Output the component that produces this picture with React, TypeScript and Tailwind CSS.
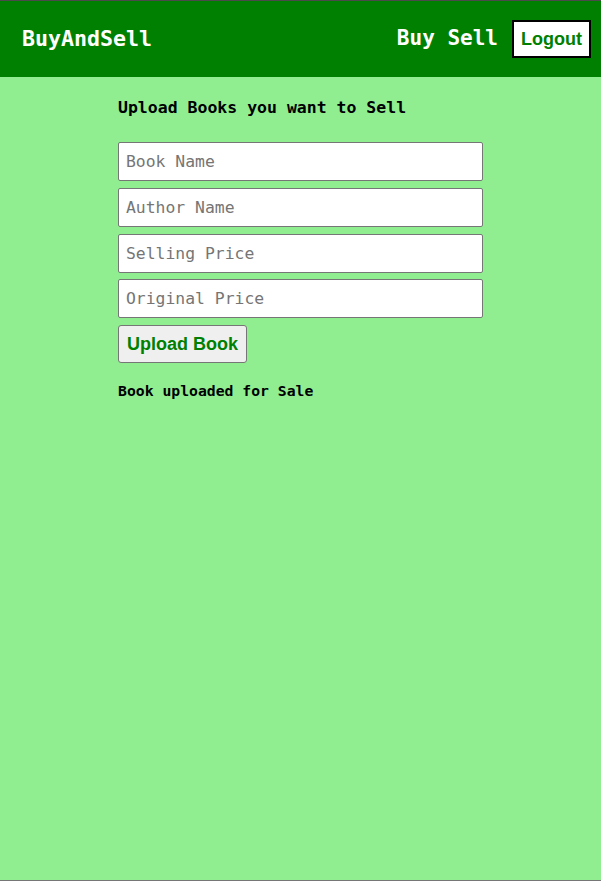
import React, { useState } from "react";

const mono = "font-['DejaVu_Sans_Mono','Liberation_Mono',monospace]";
const sans = "font-['Liberation_Sans',Arial,sans-serif]";

export default function App() {
  const [book, setBook] = useState("");
  const [author, setAuthor] = useState("");
  const [selling, setSelling] = useState("");
  const [original, setOriginal] = useState("");

  const inputCls = `h-[39px] w-full rounded-[2px] border border-[#767676] bg-white px-[7px] text-[16.4px] text-black placeholder:text-[#757575] outline-none ${mono}`;

  return (
    <div className="flex min-h-[881px] flex-col border-y border-t-[#4b4b4b] border-b-[#767676] bg-[#90ee90]">
      <header className="flex h-[76px] items-center justify-between bg-[#008000] pl-[22px] pr-[10px]">
        <span className={`text-[21.6px] font-bold text-white ${mono}`}>BuyAndSell</span>
        <nav className="flex items-center gap-[14px]">
          <span className={`text-[21px] font-bold text-white ${mono}`}>Buy Sell</span>
          <button
            className={`h-[38px] border-2 border-black bg-white px-[7px] text-[18px] leading-[20px] font-bold text-[#008000] ${sans}`}
          >
            Logout
          </button>
        </nav>
      </header>

      <main className="mx-auto w-[365px] pt-[21px]">
        <h3 className={`text-[16.5px] leading-[19px] font-bold text-black ${mono}`}>
          Upload Books you want to Sell
        </h3>

        <form className="mt-[25px] flex flex-col gap-[6.8px]" onSubmit={(e) => e.preventDefault()}>
          <input className={inputCls} placeholder="Book Name" value={book} onChange={(e) => setBook(e.target.value)} />
          <input className={inputCls} placeholder="Author Name" value={author} onChange={(e) => setAuthor(e.target.value)} />
          <input className={inputCls} placeholder="Selling Price" value={selling} onChange={(e) => setSelling(e.target.value)} />
          <input className={inputCls} placeholder="Original Price" value={original} onChange={(e) => setOriginal(e.target.value)} />
          <div>
            <button
              type="submit"
              className={`h-[38px] rounded-[3px] border border-[#767676] bg-[#efefef] px-[8px] text-[18px] leading-[20px] font-bold text-[#008000] ${sans}`}
            >
              Upload Book
            </button>
          </div>
        </form>

        <p className={`mt-[19px] text-[14.75px] leading-[17px] font-bold text-black ${mono}`}>Book uploaded for Sale</p>
      </main>
    </div>
  );
}
